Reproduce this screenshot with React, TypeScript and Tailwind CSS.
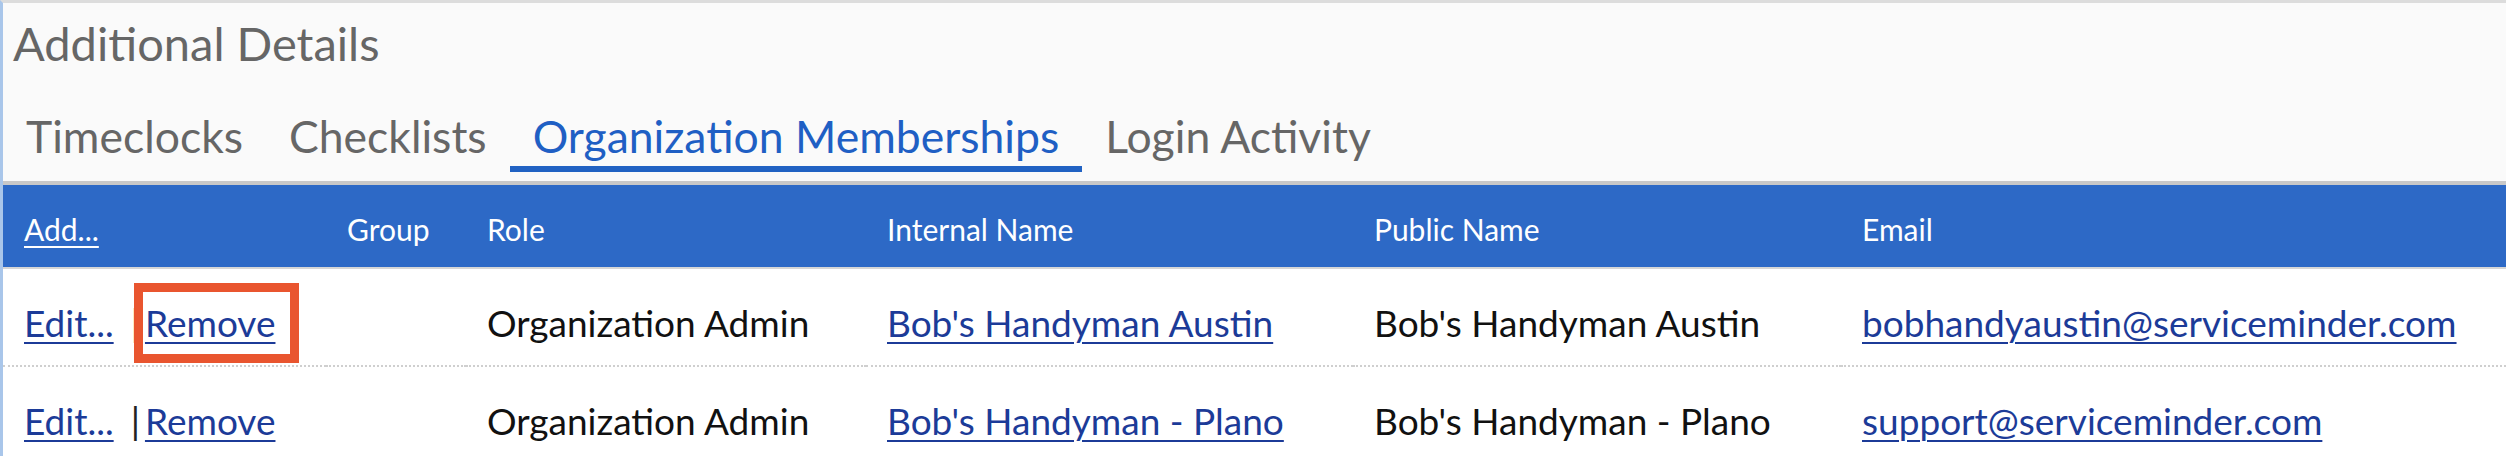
import React from "react";

const font = { fontFamily: "Lato, 'Open Sans', sans-serif" };

const tabs = ["Timeclocks", "Checklists", "Organization Memberships", "Login Activity"];

const rows = [
  {
    role: "Organization Admin",
    internal: "Bob's Handyman Austin",
    pub: "Bob's Handyman Austin",
    email: "bobhandyaustin@serviceminder.com",
    highlight: true,
  },
  {
    role: "Organization Admin",
    internal: "Bob's Handyman - Plano",
    pub: "Bob's Handyman - Plano",
    email: "support@serviceminder.com",
    highlight: false,
  },
];

const link = "text-[#1c3b98] underline decoration-2 underline-offset-[5px]";

export default function App() {
  return (
    <div
      className="w-[2506px] h-[456px] overflow-hidden bg-[#fafafa] border-t-[3px] border-t-[#dcdcdc] border-l-[3px] border-l-[#a9c6ea]"
      style={font}
    >
      {/* Title */}
      <div className="h-[80px] flex items-center pl-[10px]">
        <h2 className="text-[47px] leading-none text-[#666666]">Additional Details</h2>
      </div>

      {/* Tabs */}
      <div className="flex mb-[9px]">
        {tabs.map((t, i) => (
          <div
            key={t}
            className={
              i === 2
                ? "px-[23px] pt-[31px] pb-[8px] border-b-[6px] border-[#2162c3] text-[#1f5fc4] text-[44.5px] leading-[44px]"
                : "px-[23px] pt-[31px] pb-[8px] border-b-[6px] border-transparent text-[#666666] text-[44.5px] leading-[44px]"
            }
          >
            {t}
          </div>
        ))}
      </div>

      <div className="h-[4px] bg-[#c8c8c8]" />

      {/* Table */}
      <table className="w-full table-fixed border-collapse">
        <colgroup>
          <col className="w-[323px]" />
          <col className="w-[140px]" />
          <col className="w-[400px]" />
          <col className="w-[487px]" />
          <col className="w-[488px]" />
          <col />
        </colgroup>
        <thead>
          <tr className="h-[83px] bg-[#2d69c6] text-white text-[30px] text-left border-b-2 border-b-[#d6d6d6]">
            <th className="pl-[21px] pt-[6px] font-normal">
              <span className="underline decoration-2 underline-offset-[5px]">Add...</span>
            </th>
            <th className="pl-[21px] pt-[6px] font-normal">Group</th>
            <th className="pl-[21px] pt-[6px] font-normal">Role</th>
            <th className="pl-[21px] pt-[6px] font-normal">Internal Name</th>
            <th className="pl-[21px] pt-[6px] font-normal">Public Name</th>
            <th className="pl-[21px] pt-[6px] font-normal">Email</th>
          </tr>
        </thead>
        <tbody className="bg-white text-[37px] text-[#111111]">
          {rows.map((r) => (
            <tr key={r.email} className="h-[98px] border-b-2 border-dotted border-b-[#cfcfcf]">
              <td className="pl-[21px] pt-[12px] whitespace-nowrap">
                <span className={link}>Edit...</span>
                <span className="pl-[17px] pr-[5px] text-[#222]">|</span>
                <span className="relative inline-block leading-none">
                  <span className={link}>Remove</span>
                  {r.highlight && (
                    <span className="absolute -left-[11px] -right-[24px] -top-[21px] -bottom-[22px] bg-white/0 border-[9px] border-[#e9552f]" />
                  )}
                </span>
              </td>
              <td />
              <td className="pl-[21px] pt-[12px] whitespace-nowrap">{r.role}</td>
              <td className="pl-[21px] pt-[12px] whitespace-nowrap">
                <span className={link}>{r.internal}</span>
              </td>
              <td className="pl-[21px] pt-[12px] whitespace-nowrap">{r.pub}</td>
              <td className="pl-[21px] pt-[12px] whitespace-nowrap">
                <span className={link}>{r.email}</span>
              </td>
            </tr>
          ))}
        </tbody>
      </table>
    </div>
  );
}
